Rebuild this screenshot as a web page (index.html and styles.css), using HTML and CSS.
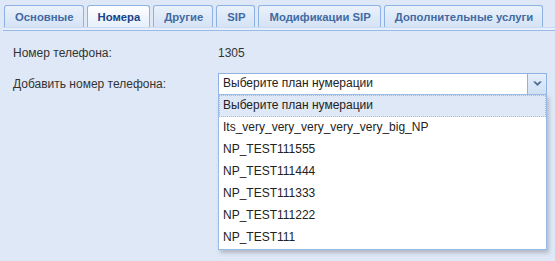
FILE: index.html
```html
<!DOCTYPE html>
<html lang="ru">
<head>
  <meta charset="UTF-8" />
  <title>Номера</title>
  <link rel="stylesheet" href="styles.css">
</head>
<body>
  <div class="tabs">
    <div class="tab">Основные</div>
    <div class="tab active">Номера</div>
    <div class="tab">Другие</div>
    <div class="tab">SIP</div>
    <div class="tab">Модификации SIP</div>
    <div class="tab">Дополнительные услуги</div>
  </div>
  <div class="strip"></div>

  <div class="form">
    <div class="row">
      <div class="label">Номер телефона:</div>
      <div class="value">1305</div>
    </div>
    <div class="row">
      <div class="label">Добавить номер телефона:</div>
      <div class="combo">
        <div class="combo-box">
          <div class="combo-input">Выберите план нумерации</div>
          <div class="combo-trigger">
            <svg width="9" height="6" viewBox="0 0 9 6"><path d="M0 0.5h2.6L4.5 2.4 6.4 0.5H9L4.5 5z" fill="#4f6d98"/></svg>
          </div>
        </div>
        <div class="combo-list">
          <div class="item selected">Выберите план нумерации</div>
          <div class="item">Its_very_very_very_very_very_big_NP</div>
          <div class="item">NP_TEST111555</div>
          <div class="item">NP_TEST111444</div>
          <div class="item">NP_TEST111333</div>
          <div class="item">NP_TEST111222</div>
          <div class="item">NP_TEST111</div>
        </div>
      </div>
    </div>
  </div>
</body>
</html>
```

FILE: styles.css
```css
html, body {
  min-height: 261px;
}

body {
  margin: 0;
  background-color: #dfe8f6;
  font-family: "Liberation Sans", Arial, sans-serif;
  font-size: 12px;
  color: #333;
}

.tabs {
  display: flex;
  align-items: flex-end;
  gap: 3px;
  padding: 5px 0 0 4px;
  height: 22px;
  white-space: nowrap;
}

.tab {
  height: 21px;
  line-height: 22px;
  padding: 0 9px 0 10px;
  border: 1px solid #8db2e3;
  border-bottom: none;
  border-radius: 3px 3px 0 0;
  background: linear-gradient(#eaf1fb, #d5e3f5);
  color: #416aa3;
  font-size: 11.3px;
  font-weight: bold;
}

.tab.active {
  background: linear-gradient(#ffffff, #e6effb);
  color: #15428b;
}

.strip {
  height: 2px;
  margin-left: 3px;
  background: #e6effb;
  border-top: 1px solid #cbdaf0;
  border-bottom: 1px solid #99bbe8;
}

.form {
  padding: 11px 0 0 13px;
}

.row {
  display: flex;
  align-items: center;
  height: 22px;
  margin-bottom: 9px;
}

.label {
  width: 205px;
}

.combo {
  position: relative;
  width: 329px;
  height: 22px;
}

.combo-box {
  display: flex;
  height: 22px;
}

.combo-input {
  flex: 1;
  background: #fff;
  border: 1px solid #8db2e3;
  padding: 0 4px;
  line-height: 19px;
  color: #222;
}

.combo-trigger {
  width: 18px;
  border: 1px solid #8db2e3;
  border-left: none;
  background: linear-gradient(#e5eefb, #cfe0f5);
  display: flex;
  align-items: center;
  justify-content: center;
}

.combo-list {
  position: absolute;
  z-index: 10;
  top: 21px;
  left: 0;
  width: 327px;
  background: #fff;
  border: 1px solid #99bbe8;
  box-shadow: 2px 3px 4px rgba(0, 0, 0, 0.2);
}

.item {
  height: 22px;
  line-height: 21px;
  padding: 0 4px;
  color: #222;
}

.item.selected {
  background: #dfe8f6;
  border: 1px dotted #a3bae9;
  line-height: 19px;
  height: 20px;
  padding: 0 3px;
}
```
